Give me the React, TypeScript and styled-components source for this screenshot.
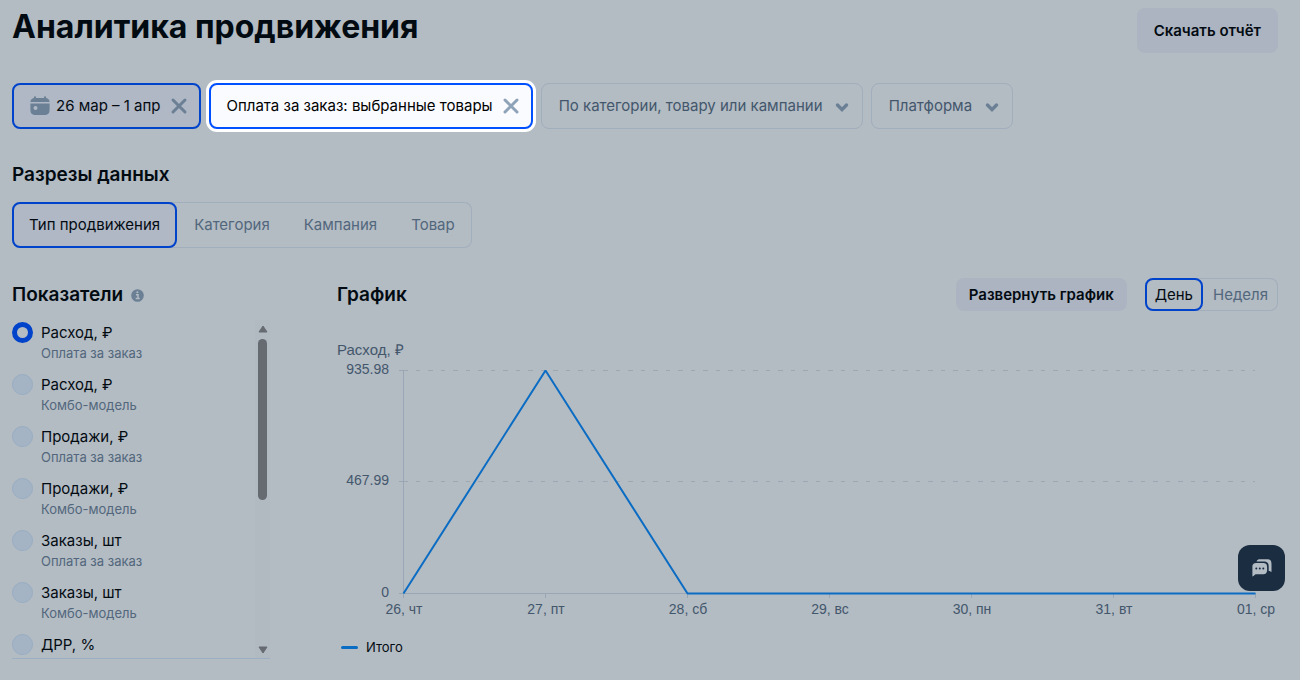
import React, { useLayoutEffect, useRef, useState } from "react";
import styled, { createGlobalStyle, css } from "styled-components";

const color = {
  page: "#b3bbc3",
  ink: "#030b12",
  muted: "#43576c",
  soft: "#52677c",
  icon: "#6b8095",
  border: "#a1aebb",
  blue: "#0043cb",
  brightBlue: "#0050ff",
  active: "#b0b7c5",
  button: "#acb4c1",
  line: "#0b6cc3",
};

const GlobalStyle = createGlobalStyle`
  * { box-sizing: border-box; }
  body {
    margin: 0;
    background: ${color.page};
    color: ${color.ink};
    font: 400 16px/20px Inter, "Liberation Sans", sans-serif;
  }
  button, input, select { font: inherit; color: inherit; margin: 0; }
  button { cursor: pointer; }
`;

const Page = styled.div`
  padding: 8px 22px 20px 12px;
`;

const Header = styled.header`
  display: flex;
  justify-content: space-between;
  align-items: flex-start;
`;

const Title = styled.h1`
  margin: 0;
  font-size: 32px;
  line-height: 38px;
  font-weight: 700;
`;

const SectionTitle = styled.h2`
  display: flex;
  align-items: center;
  gap: 8px;
  margin: 0;
  font-size: 19px;
  line-height: 24px;
  font-weight: 600;
`;

const SolidButton = styled.button<{ $small?: boolean }>`
  height: ${(p) => (p.$small ? 33 : 45)}px;
  padding: 0 ${(p) => (p.$small ? 13 : 17)}px;
  border: 0;
  border-radius: 8px;
  background: ${color.button};
  font-size: 15px;
  font-weight: 600;
`;

const Filters = styled.div`
  display: flex;
  flex-wrap: wrap;
  gap: 8px;
  margin: 30px 0 34px;
`;

const Chip = styled.div<{ $highlighted?: boolean }>`
  display: flex;
  align-items: center;
  gap: 9px;
  height: 46px;
  padding: 0 11px 0 16px;
  border: 2px solid ${color.blue};
  border-radius: 8px;
  background: ${color.active};
  ${(p) =>
    p.$highlighted &&
    css`
      border-color: ${color.brightBlue};
      background: #f9fbff;
      box-shadow: 0 0 0 3px #fff;
      color: #000;
    `}
`;

const ChipValue = styled.button`
  display: flex;
  align-items: center;
  gap: 6px;
  padding: 0;
  border: 0;
  background: none;
  font-size: 15px;
`;

const ClearButton = styled.button`
  display: flex;
  padding: 0;
  border: 0;
  background: none;
  color: ${color.icon};
`;

const SelectBox = styled.label`
  display: grid;
  align-items: center;
  color: ${color.muted};
  > * { grid-area: 1 / 1; }
  > svg {
    justify-self: end;
    margin-right: 13px;
    color: ${color.icon};
    pointer-events: none;
  }
`;

const Select = styled.select`
  appearance: none;
  height: 46px;
  padding: 0 39px 0 17px;
  border: 1px solid ${color.border};
  border-radius: 8px;
  background: transparent;
  font-size: 15px;
`;

const Segments = styled.div`
  display: inline-flex;
  border-radius: 8px;
  box-shadow: inset 0 0 0 1px ${color.border};
`;

const Segment = styled.button<{ $small?: boolean }>`
  height: ${(p) => (p.$small ? 33 : 46)}px;
  padding: 0 ${(p) => (p.$small ? 8 : 15)}px;
  border: 2px solid transparent;
  border-radius: 8px;
  background: none;
  color: ${color.soft};
  font-size: 15px;
  &[aria-pressed="true"] {
    border-color: ${color.blue};
    background: ${(p) => (p.$small ? "none" : color.active)};
    color: ${color.ink};
  }
`;

const Slices = styled.section`
  display: flex;
  flex-direction: column;
  align-items: flex-start;
  gap: 15px;
`;

const Panels = styled.div`
  display: grid;
  grid-template-columns: 258px minmax(0, 1fr);
  column-gap: 67px;
  margin-top: 30px;
`;

const PanelHead = styled.div`
  display: flex;
  align-items: center;
  min-height: 33px;
  margin-bottom: 9px;
  > ${SectionTitle} { margin-right: auto; }
  > ${SolidButton} { margin-right: 18px; }
`;

const MetricFrame = styled.div`
  display: flex;
  height: 339px;
  border-bottom: 1px solid #9db0c3;
`;

const MetricList = styled.div`
  flex: 1;
  padding-top: 2px;
  overflow-y: auto;
  scrollbar-width: none;
`;

const Metric = styled.label`
  display: grid;
  grid-template-columns: 21px 1fr;
  column-gap: 8px;
  height: 52px;
  line-height: 21px;
  font-size: 15px;
  align-content: start;
`;

const Radio = styled.input`
  appearance: none;
  width: 21px;
  height: 21px;
  border: 1px solid #98adc2;
  border-radius: 50%;
  background: #a4b4c5;
  &:checked {
    border: 5px solid ${color.blue};
    background: ${color.page};
  }
`;

const MetricNote = styled.small`
  grid-column: 2;
  font-size: 13px;
  color: ${color.soft};
`;

const ScrollTrack = styled.div`
  display: flex;
  flex-direction: column;
  align-items: center;
  width: 15px;
  padding: 5px 0 4px;
  background: #b1b9c1;
  color: #656b71;
  > :last-child { margin-top: auto; }
`;

const ScrollThumb = styled.div`
  width: 9px;
  height: 161px;
  margin-top: 6px;
  border-radius: 5px;
  background: #656b71;
`;

const ChartSvg = styled.svg`
  display: block;
  width: 100%;
  height: 300px;
  font-family: "Liberation Sans", Arial, sans-serif;
  font-size: 14px;
  fill: ${color.muted};
`;

const Legend = styled.div`
  display: flex;
  align-items: center;
  gap: 8px;
  margin-top: 17px;
  padding-left: 4px;
  font-size: 13px;
`;

const LegendMark = styled.span`
  width: 17px;
  height: 3px;
  border-radius: 2px;
  background: ${color.line};
`;

const ChatButton = styled.button`
  position: fixed;
  right: 15px;
  bottom: 89px;
  display: grid;
  place-items: center;
  width: 47px;
  height: 46px;
  padding: 0;
  border: 0;
  border-radius: 12px;
  background: #1a2d41;
`;

const CalendarIcon = () => (
  <svg width="20" height="20" viewBox="0 0 20 20" fill={color.icon} aria-hidden="true">
    <path d="M4 1.200a1 1 0 0 1 2 0V2h8v-.8a1 1 0 0 1 2 0V2c2.200.3 3.400 1.700 3.600 4H.4C.6 3.700 1.800 2.300 4 2z" />
    <path fillRule="evenodd" d="M.4 7.500h19.200V13c0 4.600-1.400 6-6 6H6.400c-4.600 0-6-1.400-6-6zM5.500 10a2 2 0 1 0 0 4a2 2 0 0 0 0-4z" />
  </svg>
);

const CrossIcon = ({ stroke }: { stroke: string }) => (
  <svg width="18" height="18" viewBox="0 0 18 18" fill="none" stroke={stroke} strokeWidth="3" strokeLinecap="round" aria-hidden="true">
    <path d="M3 3l12 12M15 3L3 15" />
  </svg>
);

const ChevronIcon = () => (
  <svg width="16" height="16" viewBox="0 0 16 16" fill="none" stroke="currentColor" strokeWidth="3.400" strokeLinecap="round" aria-hidden="true">
    <path d="M3.500 7l4.500 4.600L12.500 7" />
  </svg>
);

const InfoIcon = () => (
  <svg width="13" height="15" viewBox="0 -2 13 15" aria-hidden="true">
    <circle cx="6.5" cy="6.5" r="6.300" fill={color.icon} />
    <path d="M5 5.700h2v3.500M4.700 9.500h4" stroke={color.page} strokeWidth="1.400" fill="none" />
    <circle cx="6.400" cy="3.200" r="1" fill={color.page} />
  </svg>
);

const ArrowIcon = ({ down }: { down?: boolean }) => (
  <svg width="10" height="8" viewBox="0 0 10 8" fill="currentColor" stroke="currentColor" strokeLinejoin="round" aria-hidden="true">
    <path d={down ? "M1 1h8L5 7z" : "M1 7h8L5 1z"} />
  </svg>
);

const ChatIcon = () => (
  <svg width="20" height="18" viewBox="0 0 20 18" aria-hidden="true">
    <path d="M4.500 2.600C5 .8 6.300.3 8.300.3h6.500c3.500 0 4.700 1.200 4.700 4.700v8c-1-.7-1.600-1-2.800-1.100V8c0-4-1.300-5.400-5.400-5.400z" fill={color.page} />
    <path d="M.4 17.500V8.500C.4 5 1.500 4 5 4h5.500C14 4 15.100 5 15.100 8.500v2c0 3.500-1.100 4.700-4.600 4.700H4c-1.500 0-1.800 1.600-3.600 2.300z" fill={color.page} />
    <g fill="#1a2d41">
      <circle cx="4.300" cy="9.600" r="1" />
      <circle cx="7.800" cy="9.600" r="1" />
      <circle cx="11.300" cy="9.600" r="1" />
    </g>
  </svg>
);

const days = ["26, чт", "27, пт", "28, сб", "29, вс", "30, пн", "31, вт", "01, ср"];
const spend = [0, 935.98, 0, 0, 0, 0, 0];
const ticks = [935.98, 467.99, 0];

function SpendChart() {
  const ref = useRef<SVGSVGElement>(null);
  const [width, setWidth] = useState(941);

  useLayoutEffect(() => {
    const svg = ref.current;
    if (!svg) return;
    const observer = new ResizeObserver(() => setWidth(svg.getBoundingClientRect().width));
    observer.observe(svg);
    return () => observer.disconnect();
  }, []);

  const left = 66;
  const right = width - 23;
  const top = 50;
  const bottom = 273;
  const x = (i: number) => left + ((right - left) * i) / (days.length - 1);
  const y = (v: number) => bottom - ((bottom - top) * v) / 935.98;

  return (
    <ChartSvg ref={ref} role="img" aria-label="Расход по дням">
      <text x="0" y="35" fontSize="15">Расход, ₽</text>
      {ticks.map((t) => (
        <g key={t}>
          <text x="52" y={Math.floor(y(t)) + 4} textAnchor="end">{t}</text>
          <path d={`M${left - 4} ${Math.floor(y(t)) + 0.5}h4`} stroke="#98a6b5" />
          {t > 0 && (
            <path d={`M${left} ${Math.floor(y(t)) + 0.5}H${right}`} stroke="#9da7b1" strokeDasharray="5 8 4 8" />
          )}
        </g>
      ))}
      <path d={`M${left + 0.5} ${top}V${bottom + 0.5}H${right}`} stroke="#98a6b5" fill="none" />
      {days.map((d, i) => (
        <g key={d}>
          <path d={`M${Math.round(x(i)) + 0.5} ${bottom}v5`} stroke="#98a6b5" />
          <text x={x(i) + 1} y="294" textAnchor="middle">{d}</text>
        </g>
      ))}
      <polyline
        points={spend.map((v, i) => `${x(i) + 0.5},${y(v) + 0.5}`).join(" ")}
        fill="none"
        stroke={color.line}
        strokeWidth="2"
        strokeLinejoin="bevel"
      />
    </ChartSvg>
  );
}

const slices = ["Тип продвижения", "Категория", "Кампания", "Товар"];
const periods = ["День", "Неделя"];
const metrics = [
  ["Расход, ₽", "Оплата за заказ"],
  ["Расход, ₽", "Комбо-модель"],
  ["Продажи, ₽", "Оплата за заказ"],
  ["Продажи, ₽", "Комбо-модель"],
  ["Заказы, шт", "Оплата за заказ"],
  ["Заказы, шт", "Комбо-модель"],
  ["ДРР, %"],
];

export default function App() {
  const [slice, setSlice] = useState(slices[0]);
  const [period, setPeriod] = useState(periods[0]);
  const [metric, setMetric] = useState(0);

  return (
    <>
      <GlobalStyle />
      <Page>
        <Header>
          <Title>Аналитика продвижения</Title>
          <SolidButton>Скачать отчёт</SolidButton>
        </Header>

        <Filters>
          <Chip>
            <ChipValue><CalendarIcon />26 мар – 1 апр</ChipValue>
            <ClearButton aria-label="Сбросить период"><CrossIcon stroke={color.icon} /></ClearButton>
          </Chip>
          <Chip $highlighted>
            <ChipValue>Оплата за заказ: выбранные товары</ChipValue>
            <ClearButton aria-label="Сбросить тип"><CrossIcon stroke="#8fa3b8" /></ClearButton>
          </Chip>
          <SelectBox>
            <Select aria-label="Категория, товар или кампания">
              <option>По категории, товару или кампании</option>
            </Select>
            <ChevronIcon />
          </SelectBox>
          <SelectBox>
            <Select aria-label="Платформа">
              <option>Платформа</option>
            </Select>
            <ChevronIcon />
          </SelectBox>
        </Filters>

        <Slices>
          <SectionTitle>Разрезы данных</SectionTitle>
          <Segments>
            {slices.map((s) => (
              <Segment key={s} aria-pressed={s === slice} onClick={() => setSlice(s)}>{s}</Segment>
            ))}
          </Segments>
        </Slices>

        <Panels>
          <section>
            <PanelHead>
              <SectionTitle>Показатели <InfoIcon /></SectionTitle>
            </PanelHead>
            <MetricFrame>
              <MetricList>
                {metrics.map(([name, note], i) => (
                  <Metric key={i}>
                    <Radio type="radio" name="metric" checked={metric === i} onChange={() => setMetric(i)} />
                    <span>{name}</span>
                    {note && <MetricNote>{note}</MetricNote>}
                  </Metric>
                ))}
              </MetricList>
              <ScrollTrack aria-hidden="true">
                <ArrowIcon />
                <ScrollThumb />
                <ArrowIcon down />
              </ScrollTrack>
            </MetricFrame>
          </section>

          <section>
            <PanelHead>
              <SectionTitle>График</SectionTitle>
              <SolidButton $small>Развернуть график</SolidButton>
              <Segments>
                {periods.map((p) => (
                  <Segment key={p} $small aria-pressed={p === period} onClick={() => setPeriod(p)}>{p}</Segment>
                ))}
              </Segments>
            </PanelHead>
            <SpendChart />
            <Legend><LegendMark />Итого</Legend>
          </section>
        </Panels>
      </Page>
      <ChatButton aria-label="Чат"><ChatIcon /></ChatButton>
    </>
  );
}
